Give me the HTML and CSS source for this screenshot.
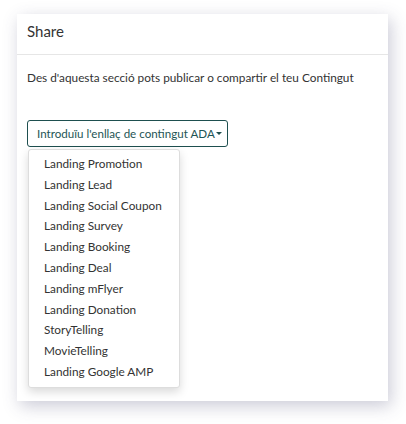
FILE: index.html
```html
<!DOCTYPE html>
<html lang="ca">
<head>
  <meta charset="UTF-8" />
  <title>Share</title>
  <link rel="stylesheet" href="styles.css">
</head>
<body>

  <div class="card">
    <div class="card-header">Share</div>
    <div class="card-body">
      <p class="intro">Des d'aquesta secció pots publicar o compartir el teu Contingut</p>

      <div class="dropdown">
        <button class="dropdown-toggle">Introduïu l'enllaç de contingut ADA<span class="caret"></span></button>
        <ul class="dropdown-menu">
          <li>Landing Promotion</li>
          <li>Landing Lead</li>
          <li>Landing Social Coupon</li>
          <li>Landing Survey</li>
          <li>Landing Booking</li>
          <li>Landing Deal</li>
          <li>Landing mFlyer</li>
          <li>Landing Donation</li>
          <li>StoryTelling</li>
          <li>MovieTelling</li>
          <li>Landing Google AMP</li>
        </ul>
      </div>
    </div>
  </div>

</body>
</html>
```

FILE: styles.css
```css
* {
  margin: 0;
  padding: 0;
  box-sizing: border-box;
}

body {
  background: #fff;
  font-family: Lato, 'Noto Sans', sans-serif;
  color: #333;
  padding: 14px 18px 23px 17px;
}

.card {
  width: 371px;
  height: 387px;
  background: #fff;
  box-shadow: 3px 5px 16px rgba(70, 70, 110, 0.28);
}

.card-header {
  height: 41px;
  padding: 0 10px 7px;
  display: flex;
  align-items: center;
  font-size: 15px;
  color: #333;
  border-bottom: 1px solid #e6e6e6;
}

.card-body {
  padding: 15px 10px;
}

.intro {
  font-size: 11.8px;
  line-height: 16px;
  margin-bottom: 34px;
}

.dropdown {
  position: relative;
}

.dropdown-toggle {
  font-family: inherit;
  font-size: 11.6px;
  color: #1e5555;
  background: #fff;
  border: 1px solid #1e4f4f;
  border-radius: 3px;
  height: 27px;
  padding: 0 5px 0 9px;
  display: flex;
  align-items: center;
}

.caret {
  width: 0;
  height: 0;
  margin-left: 1px;
  border-left: 3px solid transparent;
  border-right: 3px solid transparent;
  border-top: 3px solid #1e4f4f;
}

.dropdown-menu {
  position: absolute;
  top: 29px;
  left: 1px;
  width: 152px;
  list-style: none;
  background: #fff;
  border: 1px solid #ddd;
  border-radius: 3px;
  box-shadow: 0 4px 10px rgba(0, 0, 0, 0.15);
  padding: 4px 0;
}

.dropdown-menu li {
  font-size: 11.8px;
  line-height: 20.8px;
  padding: 0 15px;
  color: #333;
}
```
